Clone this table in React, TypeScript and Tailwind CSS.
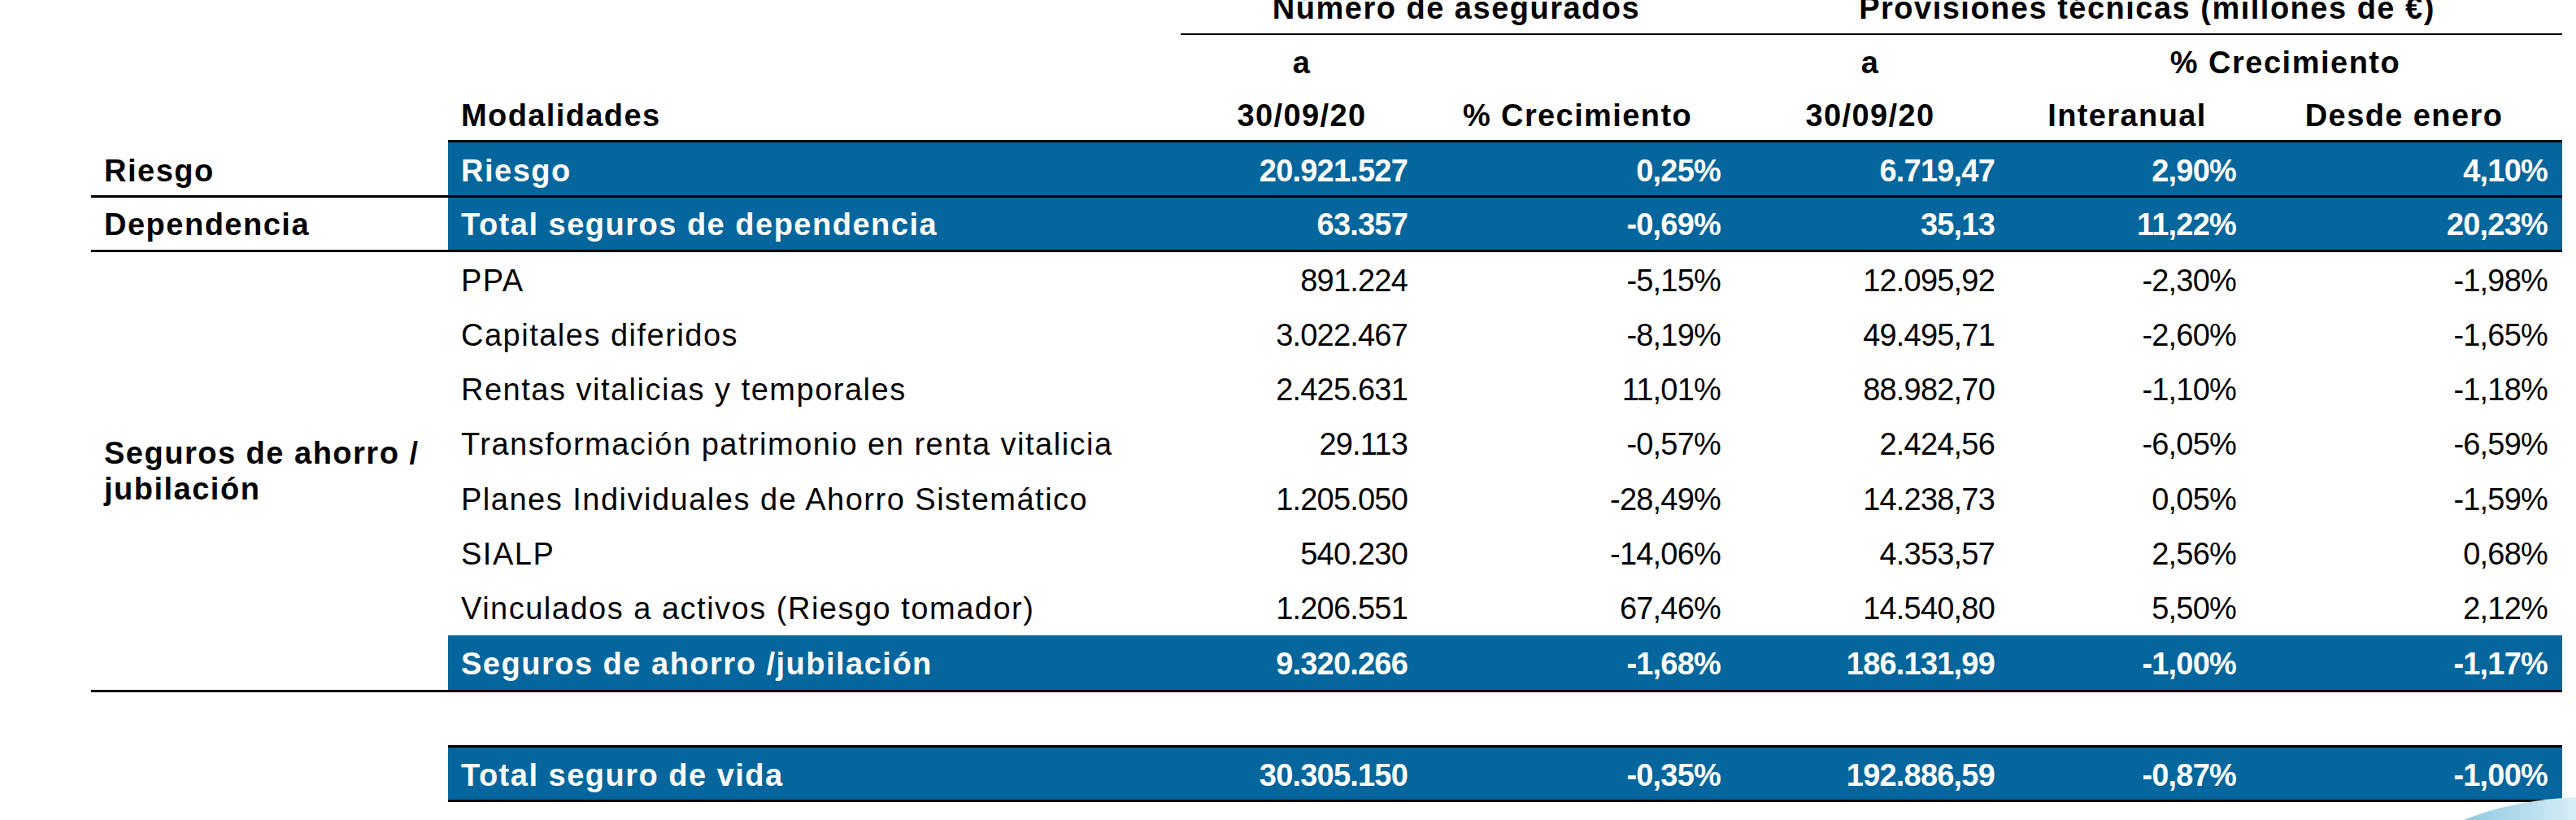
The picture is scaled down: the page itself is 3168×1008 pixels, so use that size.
import React from 'react';

const FONT = { fontFamily: '"Liberation Sans", Arial, sans-serif' };

// anchos de columna (desde x=551)
const COLS = 'grid grid-cols-[901px_298px_380px_340px_292px_389px]';

type Row = { label: string; v: string[] };

const dataRows: Row[] = [
  { label: 'PPA', v: ['891.224', '-5,15%', '12.095,92', '-2,30%', '-1,98%'] },
  { label: 'Capitales diferidos', v: ['3.022.467', '-8,19%', '49.495,71', '-2,60%', '-1,65%'] },
  { label: 'Rentas vitalicias y temporales', v: ['2.425.631', '11,01%', '88.982,70', '-1,10%', '-1,18%'] },
  { label: 'Transformación patrimonio en renta vitalicia', v: ['29.113', '-0,57%', '2.424,56', '-6,05%', '-6,59%'] },
  { label: 'Planes Individuales de Ahorro Sistemático', v: ['1.205.050', '-28,49%', '14.238,73', '0,05%', '-1,59%'] },
  { label: 'SIALP', v: ['540.230', '-14,06%', '4.353,57', '2,56%', '0,68%'] },
  { label: 'Vinculados a activos (Riesgo tomador)', v: ['1.206.551', '67,46%', '14.540,80', '5,50%', '2,12%'] },
];

const padR = ['pr-[19px]', 'pr-[14px]', 'pr-[17px]', 'pr-[12px]', 'pr-[18px]'];

function Cells({ row }: { row: Row }) {
  return (
    <>
      <div className="pl-4 tracking-[1.5px] whitespace-nowrap">{row.label}</div>
      {row.v.map((val, i) => (
        <div key={i} className={`text-right tracking-[-0.8px] ${padR[i]}`}>
          {val}
        </div>
      ))}
    </>
  );
}

function BlueRow({ row, className }: { row: Row; className: string }) {
  return (
    <div className={`${COLS} bg-[#04669c] text-white font-bold border-black ${className}`}>
      <Cells row={row} />
    </div>
  );
}

export default function App() {
  return (
    <div
      className="relative w-[3168px] h-[1008px] overflow-hidden bg-white text-black text-[38px] leading-[44px]"
      style={FONT}
    >
      <div className="mt-[-12px] pl-[112px]">
        {/* Cabecera */}
        <div className="flex font-bold">
          <div className="w-[439px]" />
          <div>
            <div className={`${COLS} h-[55px]`}>
              <div />
              <div className="col-span-2 border-b-2 border-black text-center tracking-[1.5px]">
                Número de asegurados
              </div>
              <div className="col-span-3 border-b-2 border-black text-center tracking-[1.5px]">
                Provisiones técnicas (millones de €)
              </div>
            </div>
            <div className={`${COLS} h-[77px] pt-[12px] tracking-[1.5px]`}>
              <div />
              <div className="text-center">a</div>
              <div />
              <div className="text-center">a</div>
              <div className="col-span-2 text-center">% Crecimiento</div>
            </div>
            <div className={`${COLS} h-[52px] tracking-[1.4px]`}>
              <div className="pl-4">Modalidades</div>
              <div className="text-center">30/09/20</div>
              <div className="text-center">% Crecimiento</div>
              <div className="text-center">30/09/20</div>
              <div className="text-center">Interanual</div>
              <div className="text-center">Desde enero</div>
            </div>
          </div>
        </div>

        {/* Riesgo */}
        <div className="flex">
          <div className="w-[439px] border-b-[3px] border-black pl-4 pt-[16px] font-bold tracking-[1.5px]">
            Riesgo
          </div>
          <BlueRow
            row={{ label: 'Riesgo', v: ['20.921.527', '0,25%', '6.719,47', '2,90%', '4,10%'] }}
            className="h-[71px] border-t-[3px] border-b-[3px] pt-[13px]"
          />
        </div>

        {/* Dependencia */}
        <div className="flex">
          <div className="w-[439px] border-b-[3px] border-black pl-4 pt-[11px] font-bold tracking-[1.5px]">
            Dependencia
          </div>
          <BlueRow
            row={{ label: 'Total seguros de dependencia', v: ['63.357', '-0,69%', '35,13', '11,22%', '20,23%'] }}
            className="h-[67px] border-b-[3px] pt-[11px]"
          />
        </div>

        {/* Ahorro / jubilación */}
        <div className="flex">
          <div className="w-[439px] border-b-[3px] border-black pl-4 flex items-center font-bold tracking-[1.5px]">
            <div>
              Seguros de ahorro /<br />
              jubilación
            </div>
          </div>
          <div>
            {dataRows.map((r) => (
              <div key={r.label} className={`${COLS} h-[67.3px] pt-[12.5px]`}>
                <Cells row={r} />
              </div>
            ))}
            <BlueRow
              row={{ label: 'Seguros de ahorro /jubilación', v: ['9.320.266', '-1,68%', '186.131,99', '-1,00%', '-1,17%'] }}
              className="h-[70px] border-b-[3px] pt-[12.5px]"
            />
          </div>
        </div>

        <div className="h-[65px]" />

        {/* Total */}
        <div className="flex">
          <div className="w-[439px]" />
          <BlueRow
            row={{ label: 'Total seguro de vida', v: ['30.305.150', '-0,35%', '192.886,59', '-0,87%', '-1,00%'] }}
            className="h-[70px] border-t-[3px] border-b-[3px] pt-[11.5px]"
          />
        </div>
      </div>

      {/* adorno esquina inferior derecha */}
      <svg className="absolute right-0 bottom-0" width="150" height="30" viewBox="0 0 150 30">
        <defs>
          <linearGradient id="sw" x1="0" y1="0" x2="1" y2="0">
            <stop offset="0" stopColor="#8fc9e2" />
            <stop offset="0.6" stopColor="#b9dfef" />
            <stop offset="1" stopColor="#d8eef7" />
          </linearGradient>
        </defs>
        <path d="M12 30 C 50 14, 100 4, 150 2 L150 30 Z" fill="url(#sw)" />
      </svg>
    </div>
  );
}
